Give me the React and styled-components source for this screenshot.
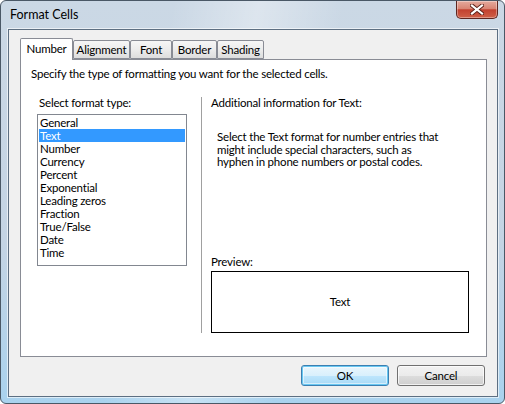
import React, { useState } from 'react';
import styled, { createGlobalStyle } from 'styled-components';

const GlobalStyle = createGlobalStyle`
  html, body {
    margin: 0;
    padding: 0;
    background: #ffffff;
  }
  body {
    font-family: 'Segoe UI', Lato, 'Noto Sans', sans-serif;
    font-size: 11.5px;
    letter-spacing: -0.2px;
    color: #000;
  }
`;

const Window = styled.div`
  width: 505px;
  height: 404px;
  box-sizing: border-box;
  display: flex;
  flex-direction: column;
  border: 1px solid #4a5866;
  border-radius: 6px;
  background:
    linear-gradient(100deg, rgba(255,255,255,0) 30%, rgba(255,255,255,0.35) 45%, rgba(255,255,255,0) 60%),
    linear-gradient(180deg, #cbd8e5 0%, #c4d4e4 60%, #a9d2ee 100%);
  overflow: hidden;
`;

const TitleBar = styled.div`
  height: 28px;
  display: flex;
  justify-content: space-between;
  align-items: flex-start;
`;

const Title = styled.div`
  padding: 6px 0 0 9px;
  line-height: 16px;
  font-size: 12.5px;
  letter-spacing: 0;
  color: #000;
`;

const CloseButton = styled.div`
  width: 42px;
  height: 18px;
  margin-right: 6px;
  box-sizing: border-box;
  border: 1px solid #5e2620;
  border-top: none;
  border-radius: 0 0 5px 5px;
  background: linear-gradient(180deg, #e5aa9d 0%, #d98574 45%, #c2412f 52%, #cf6048 100%);
  box-shadow: inset 0 0 0 1px rgba(255,255,255,0.35);
  display: flex;
  align-items: center;
  justify-content: center;
`;

const Client = styled.div`
  flex: 1;
  margin: 0 6px 6px 7px;
  border: 1px solid #5d6f82;
  box-shadow: 0 0 0 1px rgba(255,255,255,0.6);
  background: #f0f0f0;
  display: flex;
  flex-direction: column;
  padding: 8px 10px 10px 11px;
`;

const TabRow = styled.div`
  display: flex;
  align-items: flex-end;
  height: 21px;
`;

const Tab = styled.div`
  box-sizing: border-box;
  width: ${p => p.$w}px;
  height: ${p => (p.$active ? 22 : 19)}px;
  margin-bottom: ${p => (p.$active ? -1 : 0)}px;
  position: relative;
  z-index: ${p => (p.$active ? 2 : 0)};
  border: 1px solid #898c95;
  border-bottom: ${p => (p.$active ? 'none' : '1px solid #898c95')};
  border-radius: 2px 2px 0 0;
  background: ${p =>
    p.$active ? '#ffffff' : 'linear-gradient(180deg, #f6f6f6 0%, #ececec 50%, #dddddd 100%)'};
  display: flex;
  align-items: center;
  justify-content: center;
  padding-bottom: ${p => (p.$active ? 2 : 0)}px;
  line-height: 14px;
  cursor: default;
`;

const Panel = styled.div`
  flex: 1;
  background: #fff;
  border: 1px solid #898c95;
  display: flex;
  flex-direction: column;
  padding: 6px 10px 23px 10px;
`;

const Intro = styled.div`
  line-height: 15px;
`;

const Body = styled.div`
  flex: 1;
  display: flex;
  margin-top: 14px;
`;

const LeftColumn = styled.div`
  width: 160px;
  padding-left: 6px;
  display: flex;
  flex-direction: column;
`;

const Label = styled.div`
  line-height: 15px;
  padding-left: ${p => p.$indent || 0}px;
`;

const ListBox = styled.div`
  margin-top: 4px;
  width: 150px;
  height: 152px;
  box-sizing: border-box;
  border: 1px solid #828790;
  background: #fff;
  padding: 1px 1px 0 1px;
`;

const ListItem = styled.div`
  height: 13px;
  line-height: 13px;
  padding-left: 1px;
  background: ${p => (p.$selected ? '#3399ff' : 'transparent')};
  color: ${p => (p.$selected ? '#fff' : '#000')};
  cursor: default;
`;

const Divider = styled.div`
  width: 1px;
  margin-top: 2px;
  margin-left: 4px;
  background: #a0a0a0;
`;

const RightColumn = styled.div`
  flex: 1;
  padding-left: 9px;
  display: flex;
  flex-direction: column;
`;

const Description = styled.div`
  margin-top: 21px;
  padding-left: 6px;
  line-height: 12.6px;
`;

const PreviewGroup = styled.div`
  margin-top: auto;
  display: flex;
  flex-direction: column;
`;

const PreviewBox = styled.div`
  margin-top: 2px;
  width: 258px;
  height: 62px;
  box-sizing: border-box;
  border: 1px solid #000;
  display: flex;
  align-items: center;
  justify-content: center;
  padding-bottom: 2px;
`;

const ButtonRow = styled.div`
  display: flex;
  justify-content: flex-end;
  gap: 8px;
  margin-top: 8px;
  padding-right: 2px;
`;

const Button = styled.button`
  width: 88px;
  height: 21px;
  box-sizing: border-box;
  font-family: inherit;
  font-size: 11.5px;
  letter-spacing: -0.2px;
  color: #000;
  padding: 0 0 1px 0;
  border-radius: 3px;
  border: 1px solid ${p => (p.$default ? '#3c7fb1' : '#707070')};
  background: ${p =>
    p.$default
      ? 'linear-gradient(180deg, #eaf6fd 0%, #d9f0fc 50%, #bee6fd 51%, #a7d9f5 100%)'
      : 'linear-gradient(180deg, #f2f2f2 0%, #ebebeb 50%, #dddddd 51%, #cfcfcf 100%)'};
  box-shadow: ${p =>
    p.$default ? 'inset 0 0 0 1px #68c8f2, inset 0 0 0 2px rgba(255,255,255,0.5)' : 'inset 0 0 0 1px rgba(255,255,255,0.7)'};
`;

const tabs = [
  { name: 'Number', w: 53 },
  { name: 'Alignment', w: 57 },
  { name: 'Font', w: 42 },
  { name: 'Border', w: 45 },
  { name: 'Shading', w: 47 },
];

const formats = [
  'General',
  'Text',
  'Number',
  'Currency',
  'Percent',
  'Exponential',
  'Leading zeros',
  'Fraction',
  'True/False',
  'Date',
  'Time',
];

const CloseIcon = () => (
  <svg width="14" height="11" viewBox="0 0 14 11">
    <path d="M2 1.5 L12 9.5 M12 1.5 L2 9.5" stroke="#5a2018" strokeWidth="4" strokeLinecap="square" />
    <path d="M2 1.5 L12 9.5 M12 1.5 L2 9.5" stroke="#ffffff" strokeWidth="2.2" strokeLinecap="square" />
  </svg>
);

const App = () => {
  let [activeTab, setActiveTab] = useState('Number');
  let [selected, setSelected] = useState('Text');

  return (
    <>
      <GlobalStyle />
      <Window>
        <TitleBar>
          <Title>Format Cells</Title>
          <CloseButton>
            <CloseIcon />
          </CloseButton>
        </TitleBar>
        <Client>
          <TabRow>
            {tabs.map(t => (
              <Tab key={t.name} $w={t.w} $active={t.name === activeTab} onClick={() => setActiveTab(t.name)}>
                {t.name}
              </Tab>
            ))}
          </TabRow>
          <Panel>
            <Intro>Specify the type of formatting you want for the selected cells.</Intro>
            <Body>
              <LeftColumn>
                <Label $indent={2}>Select format type:</Label>
                <ListBox>
                  {formats.map(f => (
                    <ListItem key={f} $selected={f === selected} onClick={() => setSelected(f)}>
                      {f}
                    </ListItem>
                  ))}
                </ListBox>
              </LeftColumn>
              <Divider />
              <RightColumn>
                <Label>Additional information for {selected}:</Label>
                <Description>
                  Select the Text format for number entries that
                  <br />
                  might include special characters, such as
                  <br />
                  hyphen in phone numbers or postal codes.
                </Description>
                <PreviewGroup>
                  <Label>Preview:</Label>
                  <PreviewBox>Text</PreviewBox>
                </PreviewGroup>
              </RightColumn>
            </Body>
          </Panel>
          <ButtonRow>
            <Button $default>OK</Button>
            <Button>Cancel</Button>
          </ButtonRow>
        </Client>
      </Window>
    </>
  );
};

export default App;
